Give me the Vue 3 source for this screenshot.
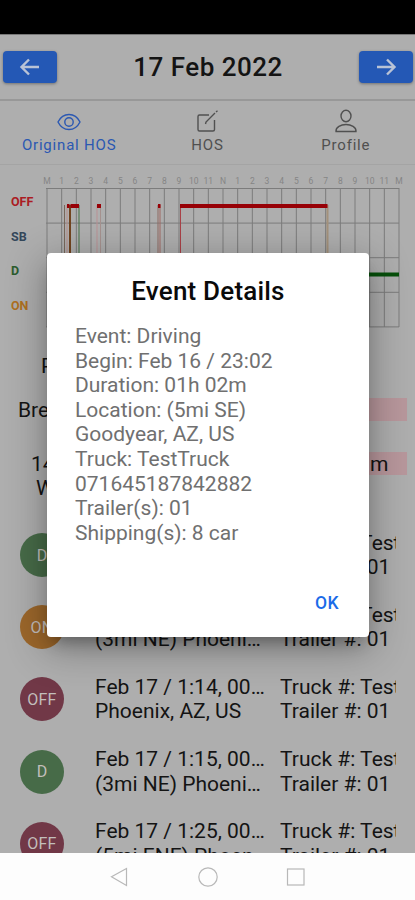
<template>
  <div class="screen">
    <div class="status-bar"></div>

    <header class="date-bar">
      <button class="nav-button" aria-label="Previous day">
        <svg width="22" height="20" viewBox="0 0 22 20"><path d="M10 2.500 L2.500 10 L10 17.500 M3 10 H20" /></svg>
      </button>
      <h1>17 Feb 2022</h1>
      <button class="nav-button" aria-label="Next day">
        <svg width="22" height="20" viewBox="0 0 22 20"><path d="M12 2.500 L19.500 10 L12 17.500 M19 10 H2" /></svg>
      </button>
    </header>

    <nav class="tabs">
      <div class="tab active">
        <svg width="24" height="26" viewBox="0 0 24 26">
          <path d="M1 14 C6 4 18 4 23 14 C18 24 6 24 1 14 Z" />
          <circle cx="12" cy="14" r="4.2" />
        </svg>
        <span>Original HOS</span>
      </div>
      <div class="tab">
        <svg width="24" height="26" viewBox="0 0 24 26">
          <path d="M14 7 H4.500 Q3 7 3 8.500 V21.500 Q3 23 4.500 23 H18 Q19.500 23 19.500 21.500 V12" />
          <path d="M10.500 16 L11 14 L20 5 M21 4 L22.500 2.800" />
        </svg>
        <span>HOS</span>
      </div>
      <div class="tab">
        <svg width="24" height="26" viewBox="0 0 24 26">
          <ellipse cx="12" cy="8" rx="5" ry="5.700" />
          <path d="M2 23.500 C1.500 19 7 16.500 12 16.500 C17 16.500 22.500 19 22 23.500 Z" />
        </svg>
        <span>Profile</span>
      </div>
    </nav>

    <section class="chart">
      <svg width="415" height="172" viewBox="0 165 415 172">
        <g class="hours">
          <text v-for="(hour, i) in hours" :key="i" :x="47 + i * step" y="184">{{ hour }}</text>
        </g>
        <g class="grid">
          <line v-for="i in 25" :key="'v' + i" :x1="47 + (i - 1) * step" :x2="47 + (i - 1) * step" y1="188" y2="327" />
          <line v-for="i in 5" :key="'h' + i" x1="46" x2="399" :y1="188.5 + (i - 1) * 34.6" :y2="188.5 + (i - 1) * 34.6" />
        </g>
        <g class="labels">
          <text v-for="row in chartRows" :key="row.label" x="11" :y="row.y" :fill="row.color">{{ row.label }}</text>
        </g>
        <line
          v-for="(link, i) in links"
          :key="'l' + i"
          :x1="link.x"
          :x2="link.x"
          y1="205"
          y2="275"
          :stroke="link.color"
          :stroke-width="link.width"
        />
        <path class="line-off" d="M67 206 H69.500 M70.500 206 H79 M97 206 H101 M158 206 H160.500 M180 206 H327.500" />
        <path class="line-driving" d="M328 274.500 H399" />
      </svg>
    </section>

    <section class="summary">
      <div v-for="item in summary" :key="item.label" class="summary-row" :class="item.name">
        <span class="summary-label">{{ item.label }}</span>
        <span v-if="item.bar" class="summary-bar">{{ item.value }}</span>
      </div>
    </section>

    <section class="events">
      <div v-for="event in events" :key="event.time" class="event">
        <span class="badge" :class="event.status.toLowerCase()">{{ event.status }}</span>
        <div class="event-info">
          <p>{{ event.time }}</p>
          <p>{{ event.place }}</p>
        </div>
        <div class="event-truck">
          <p>Truck #: TestTruck</p>
          <p>Trailer #: 01</p>
        </div>
      </div>
    </section>

    <div class="dialog">
      <h2>Event Details</h2>
      <p v-for="line in details" :key="line">{{ line }}</p>
      <button class="ok">OK</button>
    </div>

    <footer class="system-nav">
      <svg width="24" height="24" viewBox="0 0 24 24"><path d="M3.500 11.800 L18.500 3.500 V20.500 Z" /></svg>
      <svg width="24" height="24" viewBox="0 0 24 24"><circle cx="12" cy="12" r="9.2" /></svg>
      <svg width="24" height="24" viewBox="0 0 24 24"><rect x="3.5" y="4" width="16.5" height="16" /></svg>
    </footer>
  </div>
</template>

<script setup>
const step = 352 / 24

const hours = ['M', 1, 2, 3, 4, 5, 6, 7, 8, 9, 10, 11, 'N', 1, 2, 3, 4, 5, 6, 7, 8, 9, 10, 11, 'M']

const chartRows = [
  { label: 'OFF', y: 206, color: '#ab1c23' },
  { label: 'SB', y: 240.5, color: '#34475a' },
  { label: 'D', y: 275, color: '#2b5c2d' },
  { label: 'ON', y: 309.5, color: '#ae701f' },
]

const links = [
  { x: 64.5, color: '#78665a', width: 1 },
  { x: 67, color: '#b98f8b', width: 1 },
  { x: 70, color: '#71441f', width: 2 },
  { x: 79, color: '#427044', width: 1 },
  { x: 97, color: '#b99194', width: 1 },
  { x: 100.5, color: '#a5918e', width: 1 },
  { x: 158, color: '#8f6b63', width: 1 },
  { x: 160, color: '#a06962', width: 1 },
  { x: 180.5, color: '#a94147', width: 1 },
  { x: 327.5, color: '#a3917b', width: 2 },
]

const summary = [
  { name: 'pc', label: 'PC', bar: false },
  { name: 'break', label: 'Bre', bar: true, value: '' },
  { name: 'shift', label: '14', bar: true, value: 'm' },
  { name: 'window', label: 'W', bar: false },
]

const events = [
  { status: 'D', time: 'Feb 17 / 0:04, 00h 58m', place: '(5mi SE) Goodyear, AZ, US' },
  { status: 'ON', time: 'Feb 17 / 1:02, 00h 12m', place: '(3mi NE) Phoenix, AZ, US' },
  { status: 'OFF', time: 'Feb 17 / 1:14, 00h 01m', place: 'Phoenix, AZ, US' },
  { status: 'D', time: 'Feb 17 / 1:15, 00h 10m', place: '(3mi NE) Phoenix, AZ, US' },
  { status: 'OFF', time: 'Feb 17 / 1:25, 00h 40m', place: '(5mi ENE) Phoenix, AZ, US' },
]

const details = [
  'Event: Driving',
  'Begin: Feb 16 / 23:02',
  'Duration: 01h 02m',
  'Location: (5mi SE)',
  'Goodyear, AZ, US',
  'Truck: TestTruck',
  '071645187842882',
  'Trailer(s): 01',
  'Shipping(s): 8 car',
]
</script>

<style>
body {
  margin: 0;
}
</style>

<style scoped>
.screen {
  position: relative;
  display: flex;
  flex-direction: column;
  width: 415px;
  height: 900px;
  overflow: hidden;
  background: #aeaeae;
  color: #141414;
  font-family: Roboto, sans-serif;
}

p,
h1,
h2 {
  margin: 0;
}

svg {
  display: block;
  fill: none;
}

.status-bar {
  flex: none;
  height: 34px;
  background: #000;
}

.date-bar {
  flex: none;
  display: flex;
  align-items: center;
  justify-content: space-between;
  height: 67px;
  padding: 0 2px 0 3px;
  box-sizing: border-box;
  border-bottom: 2px solid #989898;
  border-top: 1px solid #777;
}

.date-bar h1 {
  font-size: 26px;
  font-weight: 500;
  letter-spacing: 0.5px;
}

.nav-button {
  display: flex;
  align-items: center;
  justify-content: center;
  width: 54px;
  height: 32px;
  padding: 0;
  border: 0;
  border-radius: 4px;
  background: #2458b5;
  box-shadow: 0 1px 3px rgba(0, 0, 0, 0.35);
}

.nav-button svg {
  stroke: #b9c3d6;
  stroke-width: 2.4;
}

.tabs {
  flex: none;
  display: flex;
  height: 64px;
  box-sizing: border-box;
  border-bottom: 1px solid #a4a4a4;
}

.tab {
  display: flex;
  flex-direction: column;
  align-items: center;
  width: 138.5px;
  padding-top: 7px;
  color: #505050;
  font-size: 15px;
  line-height: 20px;
  letter-spacing: 0.8px;
}

.tab svg {
  stroke: currentColor;
  stroke-width: 1.4;
}

.tab span {
  margin-top: 1px;
}

.active {
  color: #2b58b2;
}

.chart {
  flex: none;
  height: 172px;
}

.hours text {
  fill: #858585;
  font-size: 8.5px;
  text-anchor: middle;
}

.grid line {
  stroke: #7c7c7c;
  stroke-width: 1;
}

.labels text {
  font-size: 12.5px;
  font-weight: 700;
}

.line-off {
  stroke: #970006;
  stroke-width: 4;
}

.line-driving {
  stroke: #064f0a;
  stroke-width: 4;
}

.summary {
  flex: none;
  height: 182px;
  padding: 17px 8px 0 0;
  box-sizing: border-box;
  font-size: 21px;
  line-height: 24px;
}

.summary-row {
  display: flex;
  justify-content: space-between;
  height: 24px;
}

.summary-bar {
  width: 92px;
  height: 23px;
  padding-left: 55px;
  box-sizing: border-box;
  background: #b8979c;
}

.pc {
  padding-left: 41px;
}

.break {
  margin-top: 20px;
  padding-left: 18px;
}

.shift {
  margin-top: 30px;
  padding-left: 31px;
}

.window {
  padding-left: 36px;
}

.events {
  flex: 1;
  min-height: 0;
  overflow: hidden;
}

.event {
  display: flex;
  align-items: center;
  height: 72.2px;
  padding: 0 18px 0 20px;
}

.badge {
  flex: none;
  display: flex;
  align-items: center;
  justify-content: center;
  width: 44px;
  height: 44px;
  border-radius: 50%;
  color: #c2bebb;
  font-size: 16px;
  letter-spacing: 0.2px;
}

.d {
  background: #476b48;
}

.on {
  background: #9c672b;
}

.off {
  background: #713847;
}

.event-info,
.event-truck {
  font-size: 21px;
  line-height: 24.5px;
  white-space: nowrap;
}

.event-info {
  width: 173px;
  margin-left: 31px;
}

.event-info p {
  overflow: hidden;
  text-overflow: ellipsis;
}

.event-truck {
  width: 116px;
  margin-left: 12px;
  overflow: hidden;
}

.dialog {
  position: absolute;
  top: 253px;
  left: 47px;
  display: flex;
  flex-direction: column;
  width: 322px;
  height: 384px;
  padding: 24px 28px 14px;
  box-sizing: border-box;
  border-radius: 4px;
  background: #fff;
  box-shadow: 0 11px 15px -7px rgba(0, 0, 0, 0.3), 0 10px 38px 3px rgba(0, 0, 0, 0.3);
}

.dialog h2 {
  margin-bottom: 18px;
  color: #0a0a0a;
  font-size: 26px;
  font-weight: 500;
  letter-spacing: 0.2px;
  line-height: 29px;
  text-align: center;
}

.dialog p {
  color: #707070;
  font-size: 21px;
  line-height: 24.6px;
}

.ok {
  align-self: flex-end;
  margin-top: auto;
  padding: 10px 2px;
  border: 0;
  background: none;
  color: #1b6be8;
  font: 500 17.5px/20px Roboto, sans-serif;
  letter-spacing: 0.4px;
}

.system-nav {
  flex: none;
  display: flex;
  align-items: center;
  justify-content: center;
  gap: 64px;
  height: 47px;
  background: #fdfdfd;
}

.system-nav svg {
  stroke: #b8b8b8;
  stroke-width: 1.2;
}
</style>
